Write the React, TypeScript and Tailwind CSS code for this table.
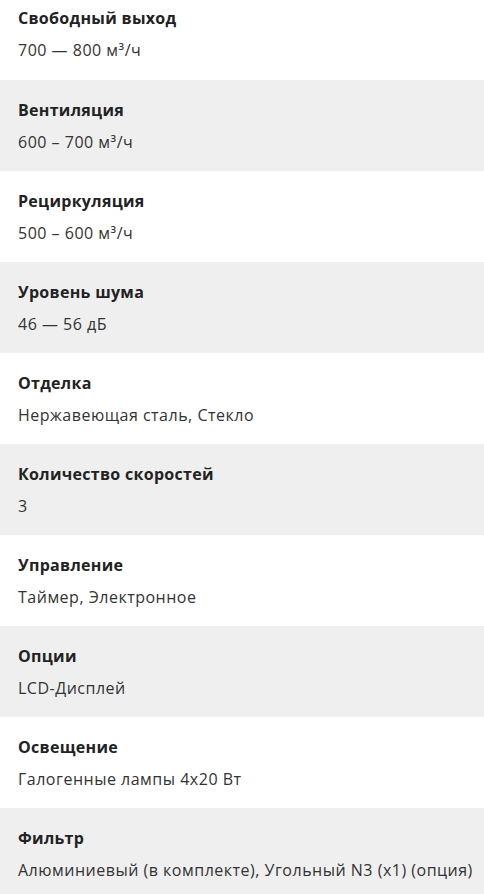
import React from 'react';

const specs = [
  { label: 'Свободный выход', value: '700 — 800 м³/ч' },
  { label: 'Вентиляция', value: '600 – 700 м³/ч' },
  { label: 'Рециркуляция', value: '500 – 600 м³/ч' },
  { label: 'Уровень шума', value: '46 — 56 дБ' },
  { label: 'Отделка', value: 'Нержавеющая сталь, Стекло' },
  { label: 'Количество скоростей', value: '3' },
  { label: 'Управление', value: 'Таймер, Электронное' },
  { label: 'Опции', value: 'LCD-Дисплей' },
  { label: 'Освещение', value: 'Галогенные лампы 4x20 Вт' },
  { label: 'Фильтр', value: 'Алюминиевый (в комплекте), Угольный N3 (x1) (опция)' },
];

export default function App() {
  return (
    <div className="w-[484px] h-[894px] overflow-hidden bg-white font-['Open_Sans',sans-serif]">
      {specs.map((s, i) => (
        <div
          key={i}
          className={
            (i % 2 === 1 ? 'bg-[#efefef] ' : 'bg-white ') +
            (i === 0 ? 'pt-[6px] pb-[18px] ' : 'pt-[18px] pb-[17px] ') +
            'px-[18px]'
          }
        >
          <div className="text-[16px] leading-6 font-bold text-[#222] tracking-[0.3px]">{s.label}</div>
          <div className="mt-2 text-[16px] leading-6 text-[#333] tracking-[0.5px] whitespace-nowrap">{s.value}</div>
        </div>
      ))}
    </div>
  );
}
